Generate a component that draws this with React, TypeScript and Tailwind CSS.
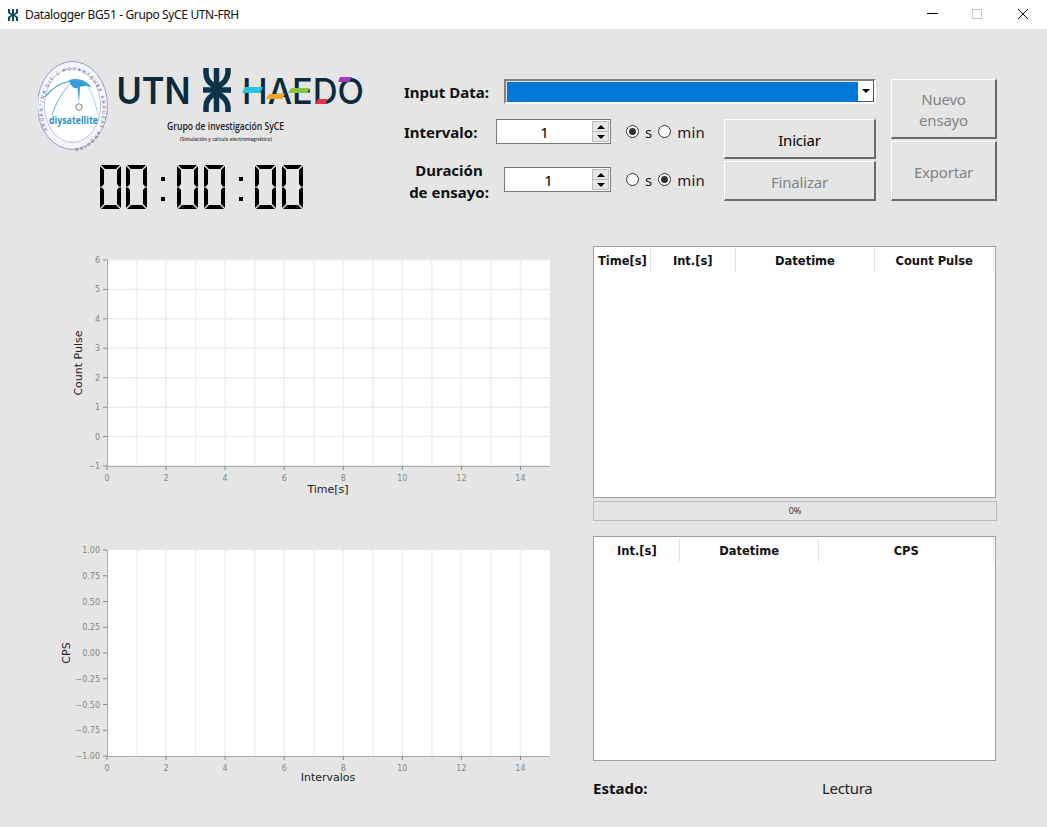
const ui = { fontFamily: '"Noto Sans", sans-serif' };

function Logo() {
  return (
    <svg width="340" height="92" viewBox="38 60 340 92" className="block">
      <ellipse cx="72.5" cy="105.5" rx="35" ry="44" fill="#f4f4fa" stroke="#9c9cc8" strokeWidth="1" />
      <ellipse cx="72.5" cy="105.5" rx="28" ry="37" fill="#fff" stroke="#b4b4d8" strokeWidth="0.8" />
      <path id="ring" d="M 47 130 A 30 39 0 1 1 98 130 A 30 39 0 0 1 47 130" fill="none" />
      <text fontSize="4.4" fill="#4a4a86" fontFamily="Liberation Sans" letterSpacing="1.7">
        <textPath href="#ring">ARGENTINA DIY-1 POCKETQUBE ARDUSAT ARDUIDE</textPath>
      </text>
      <path d="M69 80 C80 77 88 82 92 88 C87 85 84 86 80 87 L79 103 L77.5 88 C74 89 71 87 69 80Z" fill="#3a9ed6" />
      <path d="M71 81 C60 83 51 89 45 97" fill="none" stroke="#3a9ed6" strokeWidth="1.2" />
      <path d="M71 83 C62 92 56 103 52 115" fill="none" stroke="#5cb0e0" strokeWidth="1" />
      <path d="M86 84 C92 92 96 104 98 115" fill="none" stroke="#8cc4ea" strokeWidth="0.8" />
      <circle cx="79" cy="107" r="3.2" fill="#fff" stroke="#6a7f92" strokeWidth="1" />
      <text x="73.5" y="124" textAnchor="middle" fontSize="10.5" fontWeight="700" fill="#2f93c8" fontFamily="Open Sans" textLength="49" lengthAdjust="spacingAndGlyphs">
        diysatellite
      </text>
      <text x="116.5" y="104" fontSize="37" fontWeight="600" fill="#0c2a3b" fontFamily="Inter" textLength="74" lengthAdjust="spacingAndGlyphs">
        UTN
      </text>
      <g fill="none" stroke="#0c3347" strokeWidth="5.5">
        <path d="M216.5 68 V112" />
        <path d="M206 68 V73 C206 82 212 84 216.5 88 C221 84 227 82 228 73 V68" />
        <path d="M206 112 V107 C206 98 212 96 216.5 92 C221 96 227 98 228 107 V112" />
        <path d="M203 90 H231" />
      </g>
      <text x="242" y="104" fontSize="36" fontWeight="500" fill="#0c2a3b" fontFamily="Inter" textLength="122" lengthAdjust="spacingAndGlyphs">
        HAEDO
      </text>
      <path d="M245 87 h18 l-3 6 h-18Z" fill="#28c4e8" />
      <path d="M269 94 h16 l-3 5 h-16Z" fill="#f5a623" />
      <path d="M291 88 h19 l-3 5 h-19Z" fill="#8cc63f" />
      <path d="M318 99 h9 l-1 5 h-11Z" fill="#e8304a" />
      <path d="M340 77 h12 l-3 5 h-11Z" fill="#a03cb4" />
      <text x="225.5" y="130" textAnchor="middle" fontSize="10.5" fontWeight="600" fill="#222" fontFamily="Open Sans" textLength="117" lengthAdjust="spacingAndGlyphs">
        Grupo de investigación SyCE
      </text>
      <text x="226" y="141" textAnchor="middle" fontSize="5.5" fontWeight="600" fill="#333" fontFamily="Open Sans" textLength="92" lengthAdjust="spacingAndGlyphs">
        (Simulación y calculo electromagnético)
      </text>
    </svg>
  );
}

function SevenSegZero({ x }: { x: number }) {
  // one "0": six segments, each a bevelled bar
  return (
    <g transform={`translate(${x} 0)`} fill="#000">
      <path d="M1 0 H20 L16 4 H5Z" />
      <path d="M1 44 H20 L16 40 H5Z" />
      <path d="M0 1 L4 5 V19 L2 21.5 L0 21.5Z" />
      <path d="M21 1 L17 5 V19 L19 21.5 L21 21.5Z" />
      <path d="M0 43 L4 39 V25 L2 22.5 L0 22.5Z" />
      <path d="M21 43 L17 39 V25 L19 22.5 L21 22.5Z" />
    </g>
  );
}

function Clock() {
  return (
    <svg width="205" height="44" viewBox="0 0 205 44" className="block">
      <SevenSegZero x={0} />
      <SevenSegZero x={26} />
      <rect x="61" y="12" width="4" height="4" />
      <rect x="61" y="32" width="4" height="4" />
      <SevenSegZero x={77} />
      <SevenSegZero x={104} />
      <rect x="139" y="12" width="4" height="4" />
      <rect x="139" y="32" width="4" height="4" />
      <SevenSegZero x={155} />
      <SevenSegZero x={182} />
    </svg>
  );
}

function SpinBox({ width }: { width: string }) {
  return (
    <div className={`flex h-[25px] items-center border border-[#7a7a7a] bg-white ${width}`}>
      <div className="flex-1 pt-[1px] text-center text-[15px] leading-none text-black">1</div>
      <div className="mr-[1px] flex h-[21px] w-[17px] flex-col gap-[1px] bg-[#bdbdbd] p-[1px]">
        <div className="flex flex-1 items-center justify-center bg-[#e6e6e6]">
          <div className="h-0 w-0 border-x-[4px] border-b-[4px] border-x-transparent border-b-black" />
        </div>
        <div className="flex flex-1 items-center justify-center bg-[#e6e6e6]">
          <div className="h-0 w-0 border-x-[4px] border-t-[4px] border-x-transparent border-t-black" />
        </div>
      </div>
    </div>
  );
}

function Radio({ checked, label }: { checked?: boolean; label: string }) {
  return (
    <div className="flex items-center gap-[6px]">
      <div className="flex h-[13px] w-[13px] items-center justify-center rounded-full border border-[#333] bg-white">
        {checked && <div className="h-[7px] w-[7px] rounded-full bg-[#333]" />}
      </div>
      <span className="pt-[1px] text-[15px] leading-none tracking-[0.1px] text-[#222]">{label}</span>
    </div>
  );
}

function Units({ selected }: { selected: "s" | "min" }) {
  return (
    <div className="flex items-center gap-[6px]">
      <Radio label="s" checked={selected === "s"} />
      <Radio label="min" checked={selected === "min"} />
    </div>
  );
}

function RaisedButton({ children, disabled, className }: { children: React.ReactNode; disabled?: boolean; className: string }) {
  return (
    <div
      className={`flex items-center justify-center border-t border-l border-r-2 border-b-2 border-t-white border-l-white border-r-[#6a6a6a] border-b-[#6a6a6a] bg-[#e5e5e5] pt-[3px] text-center text-[15px] leading-[21px] tracking-[-0.2px] ${
        disabled ? "text-[#838383]" : "text-black"
      } ${className}`}
    >
      {children}
    </div>
  );
}

function Chart({
  xTicks,
  yTicks,
  yLabel,
  xLabel,
  xLabelY,
  yLabelX,
  hGrid,
}: {
  xTicks: number[];
  yTicks: string[];
  yLabel: string;
  xLabel: string;
  xLabelY: number;
  yLabelX: number;
  hGrid: boolean;
}) {
  const left = 57;
  const top = 10;
  const w = 443;
  const h = 206;
  const tx = (v: number) => left + (w * v) / 15;
  const ty = (i: number) => top + h - (h * i) / (yTicks.length - 1);
  const ink = "DejaVu Sans";
  return (
    <svg width="510" height="250" viewBox="0 0 510 250" className="block">
      <rect x={left} y={top} width={w} height={h} fill="#fff" />
      {xTicks.map((v) => (
        <line key={v} x1={tx(v)} x2={tx(v)} y1={top} y2={top + h} stroke="#eeeeee" strokeWidth="1.5" />
      ))}
      {hGrid &&
        yTicks.map((_, i) => (
          <line key={i} x1={left} x2={left + w} y1={ty(i)} y2={ty(i)} stroke="#eeeeee" strokeWidth="1.5" />
        ))}
      <path d={`M${left + 0.5} ${top} V${top + h + 0.5} H${left + w}`} fill="none" stroke="#a8a8a8" />
      {xTicks
        .filter((v) => v % 2 === 0)
        .map((v) => (
          <g key={v}>
            <line x1={tx(v)} x2={tx(v)} y1={top + h} y2={top + h + 4} stroke="#888" />
            <text x={tx(v)} y={top + h + 14.5} textAnchor="middle" fontSize="8" fill="#888" fontFamily={ink}>
              {v}
            </text>
          </g>
        ))}
      {yTicks.map((t, i) => (
        <g key={t}>
          <line x1={left - 4} x2={left} y1={ty(i)} y2={ty(i)} stroke="#888" />
          <text x={left - 7} y={ty(i) + 3} textAnchor="end" fontSize="8" fill="#888" fontFamily={ink}>
            {t}
          </text>
        </g>
      ))}
      <text x="278" y={xLabelY} textAnchor="middle" fontSize="11" fill="#222" fontFamily={ink}>
        {xLabel}
      </text>
      <text
        transform={`translate(${yLabelX} ${top + h / 2}) rotate(-90)`}
        textAnchor="middle"
        fontSize="11"
        fill="#222"
        fontFamily={ink}
      >
        {yLabel}
      </text>
    </svg>
  );
}

function DataTable({ columns, height }: { columns: { label: string; width: string }[]; height: string }) {
  return (
    <div className={`border border-[#a0a0a0] bg-white p-[1px] ${height}`}>
      <div className="flex h-[24px]" style={{ fontFamily: '"DejaVu Sans", sans-serif' }}>
        {columns.map((col) => (
          <div
            key={col.label}
            className={`flex items-center justify-center border-r border-[#e4e4e4] pt-[3px] text-[11.5px] font-bold text-[#111] ${col.width}`}
          >
            {col.label}
          </div>
        ))}
      </div>
    </div>
  );
}

const xs = Array.from({ length: 15 }, (_, i) => i);

export default function App() {
  return (
    <div className="flex h-[827px] w-[1047px] flex-col overflow-hidden bg-[#e5e5e5]" style={ui}>
      <div className="flex h-[29px] items-center bg-white">
        <svg width="10" height="12" viewBox="0 0 10 12" className="ml-[8px]">
          <path d="M0 0h2v3l2 2V0h2v5l2-2V0h2v4L7 6l3 2v4H8V9L6 7v5H4V7L2 9v3H0V8l3-2-3-2Z" fill="#0c4a5e" />
        </svg>
        <span className="ml-[7px] text-[12px] tracking-[-0.36px] text-[#111]">Datalogger BG51 - Grupo SyCE UTN-FRH</span>
        <div className="ml-auto flex items-center pb-[2px]">
          <div className="h-[1px] w-[11px] bg-black" />
          <div className="ml-[34px] h-[10px] w-[10px] border border-[#c8c8c8]" />
          <svg width="12" height="12" viewBox="0 0 12 12" className="ml-[35px] mr-[18px]">
            <path d="M1 1l10 10M11 1L1 11" stroke="#111" fill="none" />
          </svg>
        </div>
      </div>

      <div className="flex pl-[38px] pt-[31px]">
        <div className="w-[366px]">
          <Logo />
          <div className="ml-[62px] mt-[13px]">
            <Clock />
          </div>
        </div>

        <div className="mt-[19px] w-[472px]">
          <div className="flex h-[25px] items-center">
            <span className="w-[100px] pt-[2px] text-[15px] font-bold text-[#111]">Input Data:</span>
            <div className="flex h-[25px] w-[372px] border-2 border-t-[#808080] border-l-[#808080] border-r-white border-b-white">
              <div className="ml-[1px] mt-[1px] flex-1 bg-[#0078d7]" />
              <div className="flex w-[16px] items-center justify-center border-r border-b border-[#555] bg-white">
                <div className="h-0 w-0 border-x-[4px] border-t-[4px] border-x-transparent border-t-black" />
              </div>
            </div>
          </div>

          <div className="mt-[15px] flex">
            <div className="w-[320px]">
              <div className="flex h-[25px] items-center">
                <span className="w-[92px] pt-[2px] text-[15px] font-bold text-[#111]">Intervalo:</span>
                <SpinBox width="w-[115px]" />
                <div className="ml-[15px]">
                  <Units selected="s" />
                </div>
              </div>
              <div className="mt-[23px] flex h-[25px] items-center">
                <span className="w-[100px] pr-[10px] pt-[2px] text-center text-[15px] font-bold leading-[22px] text-[#111]">
                  Duración
                  <br />
                  de ensayo:
                </span>
                <SpinBox width="w-[107px]" />
                <div className="ml-[15px]">
                  <Units selected="min" />
                </div>
              </div>
            </div>
            <div className="flex flex-col gap-[2px]">
              <RaisedButton className="h-[40px] w-[152px]">Iniciar</RaisedButton>
              <RaisedButton disabled className="h-[40px] w-[152px]">
                Finalizar
              </RaisedButton>
            </div>
          </div>
        </div>

        <div className="ml-[15px] mt-[19px] flex flex-col gap-[2px]">
          <RaisedButton disabled className="h-[60px] w-[106px]">
            Nuevo
            <br />
            ensayo
          </RaisedButton>
          <RaisedButton disabled className="h-[60px] w-[106px]">
            Exportar
          </RaisedButton>
        </div>
      </div>

      <div className="flex pl-[50px]">
        <div className="mt-[41px] flex w-[543px] flex-col gap-[40px]">
          <Chart
            xTicks={xs}
            yTicks={["−1", "0", "1", "2", "3", "4", "5", "6"]}
            yLabel="Count Pulse"
            xLabel="Time[s]"
            xLabelY={243}
            yLabelX={32}
            hGrid
          />
          <Chart
            xTicks={xs}
            yTicks={["−1.00", "−0.75", "−0.50", "−0.25", "0.00", "0.25", "0.50", "0.75", "1.00"]}
            yLabel="CPS"
            xLabel="Intervalos"
            xLabelY={241}
            yLabelX={20}
            hGrid={false}
          />
        </div>

        <div className="mt-[37px] w-[403px]">
          <DataTable
            height="h-[252px]"
            columns={[
              { label: "Time[s]", width: "w-[56px]" },
              { label: "Int.[s]", width: "w-[85px]" },
              { label: "Datetime", width: "w-[140px]" },
              { label: "Count Pulse", width: "w-[119px]" },
            ]}
          />
          <div className="mt-[3px] flex h-[20px] w-[404px] items-center justify-center border border-[#bcbcbc] text-[9px] text-[#333]">
            0%
          </div>
          <div className="mt-[15px]">
            <DataTable
              height="h-[225px]"
              columns={[
                { label: "Int.[s]", width: "w-[85px]" },
                { label: "Datetime", width: "w-[140px]" },
                { label: "CPS", width: "w-[175px]" },
              ]}
            />
          </div>
          <div className="mt-[16px] flex items-center">
            <span className="w-[229px] text-[15px] font-bold text-[#111]">Estado:</span>
            <span className="text-[15px] tracking-[-0.3px] text-[#222]">Lectura</span>
          </div>
        </div>
      </div>
    </div>
  );
}
